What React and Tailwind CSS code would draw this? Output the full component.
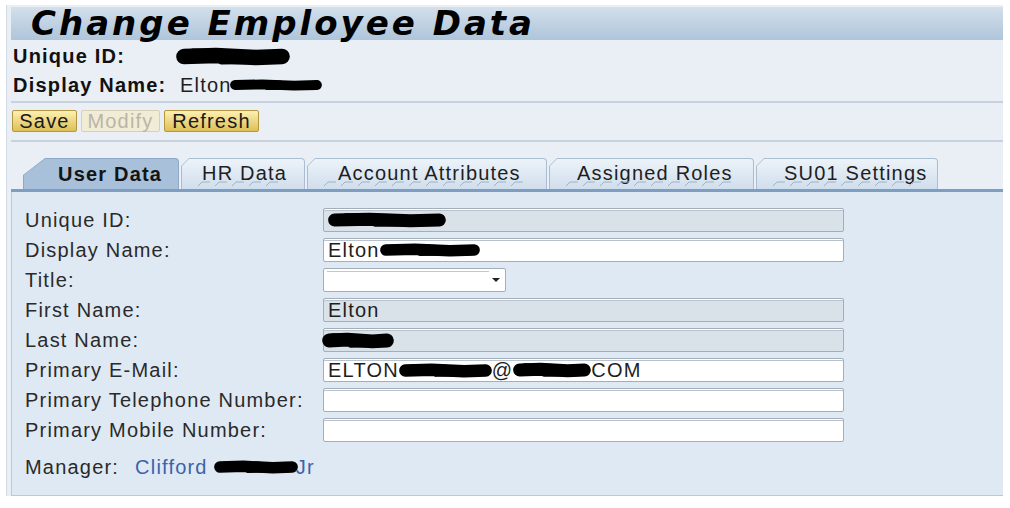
import React from "react";

// black marker scribbles over redacted values
const Redact = ({ w, h, className = "" }) => {
  const r = h * 0.42;
  return (
    <svg width={w} height={h} viewBox={`0 0 ${w} ${h}`} className={className}>
      <path
        d={`M${r} ${h * 0.5} L${w * 0.35} ${h * 0.45} L${w * 0.7} ${h * 0.55} L${w - r} ${h * 0.5}`}
        stroke="#000"
        strokeWidth={h * 0.82}
        strokeLinecap="round"
        strokeLinejoin="round"
        fill="none"
      />
      <path
        d={`M${w * 0.15} ${h * 0.25} L${w * 0.55} ${h * 0.3} M${w * 0.4} ${h * 0.75} L${w * 0.9} ${h * 0.7}`}
        stroke="#000"
        strokeWidth={h * 0.35}
        strokeLinecap="round"
        fill="none"
      />
    </svg>
  );
};

const TabPattern = ({ w }) => {
  let d = "";
  for (let x = 0; x < w - 12; x += 17) {
    d += `M${x} 6 L${x + 4} 2 L${x + 12} 2 `;
  }
  return (
    <svg width={w} height={8} className="absolute bottom-[1px] left-[16px]">
      <path d={d} stroke="#9db2c8" strokeWidth="1" fill="none" />
    </svg>
  );
};

const tabs = [
  { label: "User Data", w: "w-[156px]", pl: "pl-[34px]", px: 156, active: true },
  { label: "HR Data", w: "w-[124px]", pl: "pl-[20px]", px: 124 },
  { label: "Account Attributes", w: "w-[240px]", pl: "pl-[30px]", px: 240 },
  { label: "Assigned Roles", w: "w-[205px]", pl: "pl-[27px]", px: 205 },
  { label: "SU01 Settings", w: "w-[182px]", pl: "pl-[27px]", px: 182 },
];

const txt = "text-[20px] leading-none tracking-[1.2px] text-[#1e1e1e]";

const Field = ({ readOnly, children }) => (
  <div
    className={`flex items-center h-[24px] w-[521px] border border-[#a3aeb9] rounded-[2px] pl-[4px] shadow-[inset_0_1px_0_#ffffff,inset_0_2px_0_#b9c2cc] ${
      readOnly ? "bg-[#d9e1e9]" : "bg-white"
    }`}
  >
    {children}
  </div>
);

const rows = [
  { label: "Unique ID:", ro: true, value: <Redact w={118} h={16} /> },
  {
    label: "Display Name:",
    value: (
      <>
        <span className={txt}>Elton</span>
        <Redact w={100} h={14} />
      </>
    ),
  },
  { label: "Title:", select: true },
  { label: "First Name:", ro: true, value: <span className={txt}>Elton</span> },
  { label: "Last Name:", ro: true, value: <Redact w={72} h={17} className="-ml-[6px]" /> },
  {
    label: "Primary E-Mail:",
    value: (
      <>
        <span className={txt}>ELTON</span>
        <Redact w={93} h={15} />
        <span className={txt}>@</span>
        <Redact w={78} h={16} />
        <span className={txt}>COM</span>
      </>
    ),
  },
  { label: "Primary Telephone Number:" },
  { label: "Primary Mobile Number:" },
];

export default function App() {
  return (
    <div className="w-[1010px] h-[508px] bg-white overflow-hidden font-['Liberation_Sans',Arial,sans-serif]">
      <div className="ml-[6px] mt-[5px] w-[997px] pt-[2px] pl-[4px] bg-[#e9eff5] border-l border-[#d3dce6]">
        {/* title */}
        <div className="h-[33px] pl-[20px] bg-gradient-to-b from-[#d3dfeb] to-[#aec5db]">
          <span className="font-['DejaVu_Sans',Verdana,sans-serif] font-bold italic text-[34px] leading-[33px] tracking-[3px] text-black">
            Change Employee Data
          </span>
        </div>

        {/* header info */}
        <div className="mt-[3px] pl-[2px] flex flex-col gap-[3px]">
          <div className="h-[26px] flex items-center">
            <span className={`w-[163px] font-bold ${txt} text-[#111]`}>Unique ID:</span>
            <Redact w={114} h={19} />
          </div>
          <div className="h-[26px] flex items-center">
            <span className={`w-[167px] font-bold ${txt} text-[#111]`}>Display Name:</span>
            <span className={txt}>Elton</span>
            <Redact w={92} h={12} className="-ml-[2px]" />
          </div>
        </div>
        <div className="mt-[3px] h-[2px] bg-[#c7d2de]" />

        {/* buttons */}
        <div className="mt-[7px] pl-[1px] flex gap-[4px]">
          <button className="w-[65px] h-[22px] rounded-[2px] border border-[#b3973f] bg-gradient-to-b from-[#fdf0b0] to-[#dfbf55] text-[20px] leading-none tracking-[1.2px] text-[#1a1a1a]">
            Save
          </button>
          <button className="w-[79px] h-[22px] rounded-[2px] border border-[#d8d0b2] bg-[#f1ecd6] text-[20px] leading-none tracking-[1.2px] text-[#bab5a5]">
            Modify
          </button>
          <button className="w-[95px] h-[22px] rounded-[2px] border border-[#b3973f] bg-gradient-to-b from-[#fdf0b0] to-[#dfbf55] text-[20px] leading-none tracking-[1.2px] text-[#1a1a1a]">
            Refresh
          </button>
        </div>
        <div className="mt-[8px] h-[2px] bg-[#c7d2de]" />

        {/* tabs */}
        <div className="mt-[16px] pl-[12px] flex gap-[2px] h-[31px]">
          {tabs.map((t) =>
            t.active ? (
              <div
                key={t.label}
                className={`${t.w} h-[31px] p-[1px] pb-0 rounded-tr-[4px] bg-[#8da9c7] [clip-path:polygon(0_17px,22px_0,100%_0,100%_100%,0_100%)]`}
              >
                <div
                  className={`h-full ${t.pl} flex items-center rounded-tr-[3px] bg-[#a8c0da] [clip-path:polygon(0_16px,21px_0,100%_0,100%_100%,0_100%)]`}
                >
                  <span className={`font-bold ${txt} text-[#141414]`}>{t.label}</span>
                </div>
              </div>
            ) : (
              <div
                key={t.label}
                className={`${t.w} h-[31px] p-[1px] pb-0 rounded-tr-[4px] bg-[#a9bed3] [clip-path:polygon(0_8px,8px_0,100%_0,100%_100%,0_100%)]`}
              >
                <div
                  className={`relative h-full ${t.pl} pb-[2px] flex items-center rounded-tr-[3px] bg-gradient-to-b from-[#edf3f9] to-[#d0deec] [clip-path:polygon(0_7px,7px_0,100%_0,100%_100%,0_100%)]`}
                >
                  <span className={txt}>{t.label}</span>
                  <TabPattern w={t.px - 30} />
                </div>
              </div>
            )
          )}
        </div>
        <div className="h-[3px] bg-[#7d9ec2]" />

        {/* panel */}
        <div className="h-[304px] pt-[16px] pl-[13px] bg-[#dfe9f4] border-l border-b border-[#b8cadd]">
          <div className="flex flex-col gap-[6px]">
            {rows.map((r) => (
              <div key={r.label} className="h-[24px] flex items-center">
                <span className={`w-[298px] ${txt} text-[#2a2a2a]`}>{r.label}</span>
                {r.select ? (
                  <div className="relative flex items-center justify-end pr-[5px] h-[24px] w-[183px] bg-white border border-[#a3aeb9] rounded-[2px]">
                    <div className="absolute top-[2px] left-[3px] w-[162px] h-[1px] bg-[#bfc7cf]" />
                    <svg width="8" height="4" viewBox="0 0 8 4">
                      <path d="M0 0 H8 L4 4 Z" fill="#222" />
                    </svg>
                  </div>
                ) : (
                  <Field readOnly={r.ro}>{r.value}</Field>
                )}
              </div>
            ))}
          </div>
          <div className="mt-[13px] h-[24px] flex items-center">
            <span className={`${txt} text-[#2a2a2a]`}>Manager:</span>
            <span className={`ml-[16px] ${txt} text-[#3b62aa]`}>Clifford</span>
            <Redact w={84} h={14} className="ml-[6px]" />
            <span className={`-ml-[2px] ${txt} text-[#3b62aa]`}>Jr</span>
          </div>
        </div>
      </div>
    </div>
  );
}
